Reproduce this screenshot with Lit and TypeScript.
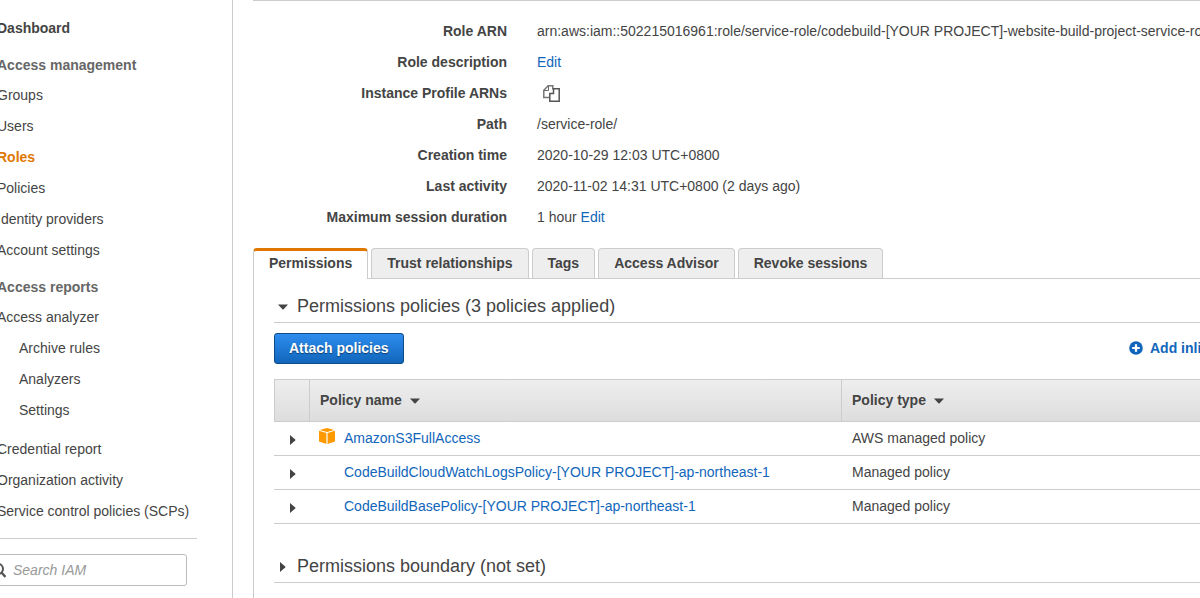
import { LitElement, html, css, svg, nothing } from "lit";
import { customElement, state } from "lit/decorators.js";
import { classMap } from "lit/directives/class-map.js";

const caretDown = svg`<svg class="caret" width="10" height="6" viewBox="0 0 10 6" aria-hidden="true"><path d="M0 .5h10L5.6 5.2q-.6.6-1.2 0z" fill="#444"/></svg>`;
const caretRight = svg`<svg class="caret" width="6" height="10" viewBox="0 0 6 10" aria-hidden="true"><path d="M0 0l5.2 4.4q.6.6 0 1.2L0 10z" fill="#444"/></svg>`;

interface NavItem {
  label: string;
  kind?: "strong" | "current" | "sub";
  spaced?: boolean;
}

const accessManagement: NavItem[] = [
  { label: "Groups" },
  { label: "Users" },
  { label: "Roles", kind: "current" },
  { label: "Policies" },
  { label: "Identity providers" },
  { label: "Account settings" },
];

const accessReports: NavItem[] = [
  { label: "Access analyzer" },
  { label: "Archive rules", kind: "sub" },
  { label: "Analyzers", kind: "sub" },
  { label: "Settings", kind: "sub" },
  { label: "Credential report", spaced: true },
  { label: "Organization activity" },
  { label: "Service control policies (SCPs)" },
];

@customElement("iam-sidebar")
class IamSidebar extends LitElement {
  static styles = css`
    :host {
      display: block;
      box-sizing: border-box;
      padding: 13px 35px 0 0;
      border-right: 1px solid #ccc;
      line-height: 31px;
    }
    a {
      display: block;
      color: #444;
      text-decoration: none;
      white-space: nowrap;
    }
    .strong { font-weight: bold; }
    .current { font-weight: bold; color: #e07700; }
    .sub { padding-left: 22px; }
    .spaced { margin-top: 8px; }
    h2 {
      margin: 6px 0 0;
      font-size: 14px;
      line-height: 30px;
      color: #666;
    }
    .search {
      margin-top: 11px;
      padding: 15px 10px 0 0;
      border-top: 1px solid #ccc;
    }
    .box {
      display: flex;
      align-items: center;
      box-sizing: border-box;
      height: 32px;
      margin-left: -6px;
      border: 1px solid #bbb;
      border-radius: 3px;
    }
    .box svg { flex: none; margin-right: 7px; }
    input {
      flex: 1;
      min-width: 0;
      padding: 0;
      border: 0;
      outline: 0;
      background: none;
      font: inherit;
      line-height: 20px;
      color: #444;
    }
    input::placeholder { color: #999; font-style: italic; opacity: 1; }
  `;

  private link(item: NavItem) {
    return html`<a
      href="#"
      class=${classMap({
        strong: item.kind === "strong",
        current: item.kind === "current",
        sub: item.kind === "sub",
        spaced: !!item.spaced,
      })}
      >${item.label}</a
    >`;
  }

  render() {
    return html`
      <nav>
        ${this.link({ label: "Dashboard", kind: "strong" })}
        <h2>Access management</h2>
        ${accessManagement.map((i) => this.link(i))}
        <h2>Access reports</h2>
        ${accessReports.map((i) => this.link(i))}
      </nav>
      <div class="search">
        <label class="box">
          <svg width="14" height="16" viewBox="0 0 14 16" aria-hidden="true">
            <circle cx="6" cy="7" r="5" fill="none" stroke="#555" stroke-width="2" />
            <path d="M9.5 10.5l4 4.5" stroke="#555" stroke-width="2.4" />
          </svg>
          <input type="text" placeholder="Search IAM" aria-label="Search IAM" />
        </label>
      </div>
    `;
  }
}

@customElement("role-summary")
class RoleSummary extends LitElement {
  static styles = css`
    :host { display: block; }
    dl {
      display: grid;
      grid-template-columns: 254px 1fr;
      column-gap: 30px;
      margin: 0;
      line-height: 31px;
      white-space: nowrap;
    }
    dt { text-align: right; font-weight: bold; }
    dd { margin: 0; }
    a { color: #1166bb; text-decoration: none; }
    button {
      display: flex;
      align-items: center;
      height: 31px;
      padding: 0 6px;
      border: 0;
      background: none;
    }
  `;

  render() {
    return html`
      <dl>
        <dt>Role ARN</dt>
        <dd>arn:aws:iam::502215016961:role/service-role/codebuild-[YOUR PROJECT]-website-build-project-service-role</dd>
        <dt>Role description</dt>
        <dd><a href="#">Edit</a></dd>
        <dt>Instance Profile ARNs</dt>
        <dd>
          <button aria-label="Copy">
            <svg width="17" height="17" viewBox="0 0 17 17" fill="none" stroke="#555" aria-hidden="true">
              <path d="M6 12.4H.8V5.2L5.2.8h4.6V4.5" stroke-width="1.5" stroke="#777" />
              <path d="M.9 5.5h4.6V.9" stroke="#666" />
              <path d="M10.5 3.8h5.7v12.4H6.8V8.5h3.7z" fill="#fff" stroke-width="1.5" />
            </svg>
          </button>
        </dd>
        <dt>Path</dt>
        <dd>/service-role/</dd>
        <dt>Creation time</dt>
        <dd>2020-10-29 12:03 UTC+0800</dd>
        <dt>Last activity</dt>
        <dd>2020-11-02 14:31 UTC+0800 (2 days ago)</dd>
        <dt>Maximum session duration</dt>
        <dd>1 hour <a href="#">Edit</a></dd>
      </dl>
    `;
  }
}

const policies = [
  { name: "AmazonS3FullAccess", type: "AWS managed policy", aws: true },
  { name: "CodeBuildCloudWatchLogsPolicy-[YOUR PROJECT]-ap-northeast-1", type: "Managed policy", aws: false },
  { name: "CodeBuildBasePolicy-[YOUR PROJECT]-ap-northeast-1", type: "Managed policy", aws: false },
];

@customElement("permissions-panel")
class PermissionsPanel extends LitElement {
  static styles = css`
    :host {
      display: block;
      padding: 11px 20px 40px;
      border: 1px solid #ccc;
    }
    button {
      font: inherit;
      color: inherit;
      padding: 0;
      border: 0;
      background: none;
    }
    h2 {
      margin: 0;
      border-bottom: 1px solid #ccc;
      font-size: 18px;
      font-weight: normal;
      line-height: 32px;
    }
    h2 button { display: flex; align-items: center; }
    .marker {
      display: flex;
      justify-content: center;
      width: 18px;
      margin-right: 5px;
      padding-top: 2px;
    }
    .caret { display: block; flex: none; }
    .actions {
      display: flex;
      justify-content: space-between;
      align-items: center;
      padding: 10px 0 15px;
    }
    .attach {
      box-sizing: border-box;
      height: 31px;
      padding: 0 14px 2px;
      border: 1px solid #0d4a87;
      border-radius: 3px;
      background: linear-gradient(#2e8def, #1166bb);
      color: #fff;
      font-weight: bold;
      text-shadow: 0 1px 1px #0b3c70;
    }
    .inline {
      display: flex;
      align-items: center;
      gap: 7px;
      padding: 0 1px 2px 0;
      color: #1166bb;
      font-weight: bold;
    }
    table {
      width: 100%;
      table-layout: fixed;
      border-collapse: separate;
      border-spacing: 0;
      line-height: 20px;
      margin-bottom: 26px;
    }
    .toggle-col { width: 36px; }
    .name-col { width: 532px; }
    th {
      height: 41px;
      padding: 0 10px;
      border: 1px solid #ccc;
      border-left: 0;
      text-align: left;
      background: linear-gradient(#eee, #ddd);
    }
    th:first-child { border-left: 1px solid #ccc; }
    th, td { box-sizing: border-box; }
    th { height: 43px; }
    td {
      height: 34px;
      padding: 0 10px 1px;
      border-bottom: 1px solid #ccc;
    }
    td.toggle { padding: 2px 0 0 16px; }
    .toggle button { display: block; }
    .sort { display: flex; align-items: center; gap: 8px; padding-bottom: 1px; font-weight: bold; }
    .sort .caret { margin-top: 2px; }
    .name { display: flex; align-items: center; }
    .badge { flex: none; width: 25px; height: 20px; margin-left: -1px; }
    .badge svg { display: block; }
    .name a { color: #1166bb; text-decoration: none; }
  `;

  render() {
    return html`
      <h2>
        <button aria-expanded="true"><span class="marker">${caretDown}</span>Permissions policies (3 policies applied)</button>
      </h2>
      <div class="actions">
        <button class="attach">Attach policies</button>
        <button class="inline">
          <svg width="14" height="14" viewBox="0 0 14 14" aria-hidden="true">
            <circle cx="7" cy="7" r="6.8" fill="#1166bb" />
            <path d="M7 3.2v7.6M3.2 7h7.6" stroke="#fff" stroke-width="2.2" />
          </svg>
          Add inline policy
        </button>
      </div>
      <table>
        <colgroup>
          <col class="toggle-col" />
          <col class="name-col" />
          <col />
        </colgroup>
        <thead>
          <tr>
            <th></th>
            <th scope="col"><button class="sort">Policy name ${caretDown}</button></th>
            <th scope="col"><button class="sort">Policy type ${caretDown}</button></th>
          </tr>
        </thead>
        <tbody>
          ${policies.map(
            (p) => html`<tr>
              <td class="toggle"><button aria-label="Expand ${p.name}">${caretRight}</button></td>
              <td>
                <span class="name">
                  <span class="badge">
                    ${p.aws
                      ? html`<svg width="16" height="16" viewBox="0 0 16 16" aria-hidden="true">
                          <path d="M0 2.8L7.4 5v11L0 13.6z" fill="#f90" />
                          <path d="M16 2.8L8.6 5v11l7.4-2.4z" fill="#f90" />
                          <path d="M.6 1.9L8 0l7.4 1.9L8 4.1z" fill="#f90" />
                        </svg>`
                      : nothing}
                  </span>
                  <a href="#">${p.name}</a>
                </span>
              </td>
              <td>${p.type}</td>
            </tr>`
          )}
        </tbody>
      </table>
      <h2>
        <button aria-expanded="false"><span class="marker">${caretRight}</span>Permissions boundary (not set)</button>
      </h2>
    `;
  }
}

const tabs = ["Permissions", "Trust relationships", "Tags", "Access Advisor", "Revoke sessions"];

@customElement("app-root")
class AppRoot extends LitElement {
  @state() private active = 0;

  static styles = css`
    :host {
      display: flex;
      min-height: 100vh;
      overflow: hidden;
      background: #fff;
      color: #444;
      font: 14px/20px "Liberation Sans", Arial, sans-serif;
    }
    iam-sidebar { flex: none; width: 236px; margin-left: -3px; }
    main {
      flex: 1;
      min-width: 0;
      margin: 0 -84px 0 20px;
      border-top: 1px solid #ccc;
    }
    role-summary { padding: 15px 0; }
    .tabs { display: flex; gap: 3px; }
    .tab {
      box-sizing: border-box;
      height: 30px;
      padding: 0 15px 1px;
      border: 1px solid #ccc;
      border-bottom: 0;
      border-radius: 4px 4px 0 0;
      background: #eee;
      color: #444;
      font: inherit;
      font-weight: bold;
    }
    .tab.active {
      position: relative;
      height: 31px;
      margin-bottom: -1px;
      padding-bottom: 4px;
      border-top: 3px solid #e07700;
      background: #fff;
    }
  `;

  render() {
    return html`
      <iam-sidebar></iam-sidebar>
      <main>
        <role-summary></role-summary>
        <div class="tabs" role="tablist">
          ${tabs.map(
            (t, i) => html`<button
              role="tab"
              aria-selected=${i === this.active}
              class=${classMap({ tab: true, active: i === this.active })}
              @click=${() => (this.active = i)}
            >${t}</button>`
          )}
        </div>
        <permissions-panel></permissions-panel>
      </main>
    `;
  }
}
